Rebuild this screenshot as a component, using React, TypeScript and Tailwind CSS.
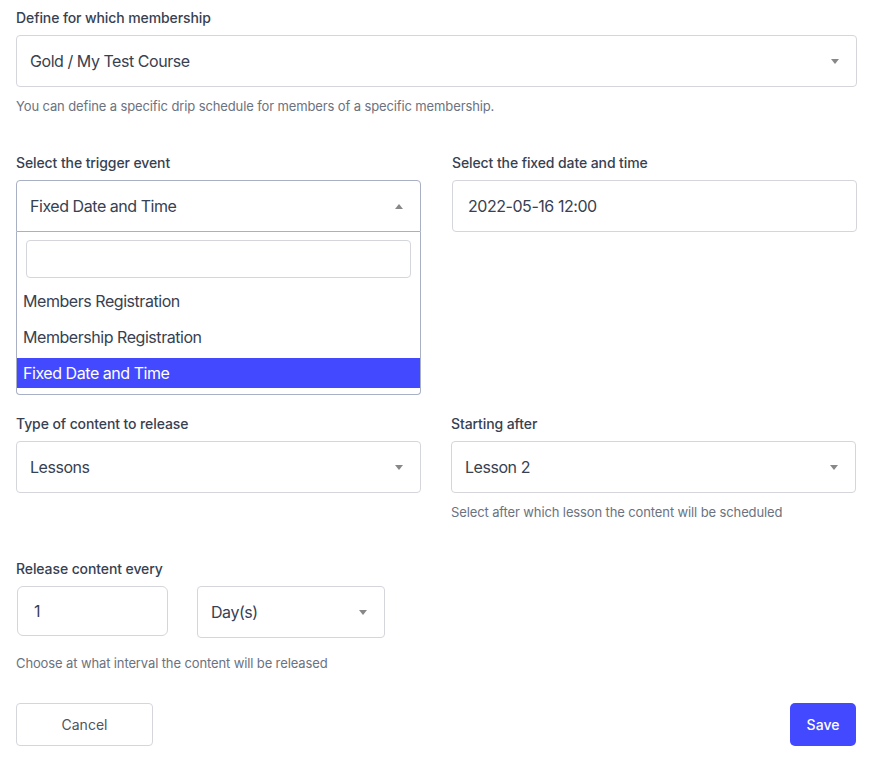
import React from "react";

function Caret({ up = false }: { up?: boolean }) {
  return (
    <svg width="8" height="5" viewBox="0 0 8 5" className="shrink-0">
      {up ? <path d="M0 5 L4 0 L8 5 Z" fill="#888888" /> : <path d="M0 0 L8 0 L4 5 Z" fill="#888888" />}
    </svg>
  );
}

function Label({ children }: { children: React.ReactNode }) {
  return <div className="text-[14px] leading-[20px] font-medium tracking-[-0.1px] text-[#374151] mb-[7px]">{children}</div>;
}

function Help({ children }: { children: React.ReactNode }) {
  return <div className="text-[13px] leading-[18px] tracking-[-0.12px] text-[#6b7280]">{children}</div>;
}

function Select({ value, className = "" }: { value: string; className?: string }) {
  return (
    <div
      className={
        "h-[52px] flex items-center justify-between pl-[13px] pr-[17px] border border-[#d4d6dc] rounded-[4px] bg-white text-[16px] tracking-[-0.45px] text-[#374151] " +
        className
      }
    >
      <span>{value}</span>
      <Caret />
    </div>
  );
}

export default function App() {
  return (
    <div className="w-[876px] h-[765px] bg-white pl-4 pr-[19px] pt-[8px]" style={{ fontFamily: "Inter, 'Noto Sans', sans-serif" }}>
      <Label>Define for which membership</Label>
      <Select value="Gold / My Test Course" />
      <div className="mt-[10px]">
        <Help>You can define a specific drip schedule for members of a specific membership.</Help>
      </div>

      <div className="grid grid-cols-[405px_405px] gap-x-[31px] mt-[38px] h-[261px]">
        <div className="relative">
          <Label>Select the trigger event</Label>
          <div className="relative">
            <div className="h-[52px] flex items-center justify-between pl-[13px] pr-[17px] border border-[#a9b0c3] rounded-t-[4px] bg-white text-[16px] tracking-[-0.45px] text-[#374151]">
              <span>Fixed Date and Time</span>
              <Caret up />
            </div>
            <div className="absolute left-0 right-0 top-[52px] z-10 bg-white border border-t-0 border-[#a9b0c3] rounded-b-[4px] pt-[8px] pb-[6px]">
              <div className="mx-[9px] h-[38px] border border-[#d4d6dc] rounded-[4px] bg-white" />
              <div className="mt-[8px] flex flex-col gap-[6px] text-[16px] tracking-[-0.45px] text-[#374151]">
                <div className="h-[30px] flex items-center pl-[6px]">Members Registration</div>
                <div className="h-[30px] flex items-center pl-[6px]">Membership Registration</div>
                <div className="h-[30px] flex items-center pl-[6px] bg-[#4349ff] text-white">Fixed Date and Time</div>
              </div>
            </div>
          </div>
        </div>
        <div>
          <Label>Select the fixed date and time</Label>
          <div className="h-[52px] flex items-center pl-[15px] border border-[#d4d6dc] rounded-[4px] bg-white text-[16px] tracking-[-0.45px] text-[#374151]">
            2022-05-16 12:00
          </div>
        </div>
      </div>

      <div className="grid grid-cols-[405px_405px] gap-x-[30px]">
        <div>
          <Label>Type of content to release</Label>
          <Select value="Lessons" />
        </div>
        <div>
          <Label>Starting after</Label>
          <Select value="Lesson 2" />
          <div className="mt-[10px]">
            <Help>Select after which lesson the content will be scheduled</Help>
          </div>
        </div>
      </div>

      <div className="mt-[38px]">
        <Label>Release content every</Label>
        <div className="flex items-start">
          <div className="ml-px w-[151px] h-[50px] flex items-center pl-[16px] border border-[#d4d6dc] rounded-[6px] bg-white text-[16px] text-[#374151]">
            1
          </div>
          <Select value="Day(s)" className="ml-[29px] w-[188px] pr-[15px]" />
        </div>
        <div className="mt-[16px]">
          <Help>Choose at what interval the content will be released</Help>
        </div>
      </div>

      <div className="mt-[31px] flex items-center justify-between pr-px">
        <button className="w-[137px] h-[43px] border border-[#d4d6dc] rounded-[4px] bg-white text-[14px] text-[#4b5563]">
          Cancel
        </button>
        <button className="w-[66px] h-[43px] rounded-[5px] bg-[#4349ff] text-[14px] font-medium text-white">Save</button>
      </div>
    </div>
  );
}
